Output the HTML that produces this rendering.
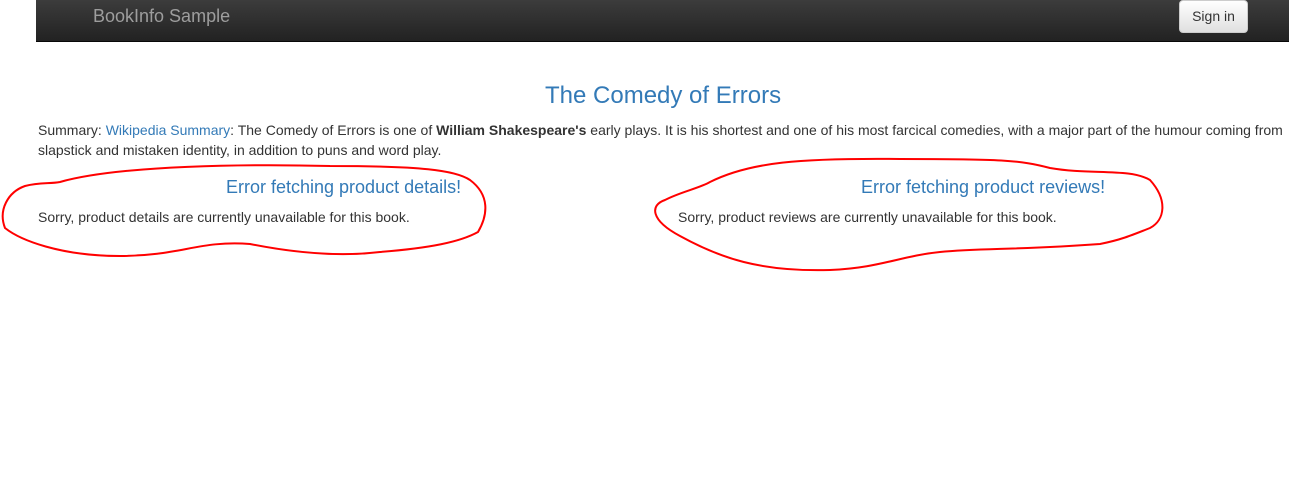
<!DOCTYPE html>
<html><head><meta charset="utf-8"><style>
body{margin:0;width:1289px;height:484px;background:#fff;font-family:"Liberation Sans",Arial,sans-serif;position:relative;overflow:hidden;color:#333}
.nav{position:absolute;left:36px;top:0;width:1253px;height:41px;background:linear-gradient(#3c3c3c,#222);border-bottom:1px solid #080808}
.brand{position:absolute;left:57px;top:6px;font-size:18px;color:#9d9d9d}
.btn{position:absolute;left:1143px;top:0;width:69px;height:33px;background:linear-gradient(#fff,#e0e0e0);border:1px solid #ccc;border-radius:4px;box-sizing:border-box;font-size:14px;color:#333;text-align:center;line-height:31px}
.t{position:absolute;white-space:nowrap}
h2{position:absolute;margin:0;font-weight:normal;color:#337ab7;white-space:nowrap}
a{color:#337ab7;text-decoration:none}
p{font-size:14px;margin:0}
</style></head><body>
<div class="nav"><div class="brand">BookInfo Sample</div><div class="btn">Sign in</div></div>
<h2 style="left:545px;top:82px;font-size:24px">The Comedy of Errors</h2>
<p class="t" style="left:38px;top:120px;line-height:20px">Summary: <a>Wikipedia Summary</a>: The Comedy of Errors is one of <b>William Shakespeare's</b> early plays. It is his shortest and one of his most farcical comedies, with a major part of the humour coming from<br>slapstick and mistaken identity, in addition to puns and word play.</p>
<h2 style="left:226px;top:177px;font-size:18px">Error fetching product details!</h2>
<p class="t" style="left:38px;top:209px">Sorry, product details are currently unavailable for this book.</p>
<h2 style="left:861px;top:177px;font-size:18px">Error fetching product reviews!</h2>
<p class="t" style="left:678px;top:209px">Sorry, product reviews are currently unavailable for this book.</p>
<svg width="1289" height="484" style="position:absolute;left:0;top:0" fill="none" stroke="#f00" stroke-width="2">
<path d="M60,182 C120,165 250,164 330,166 C420,166 455,170 470,180 C490,195 488,215 478,232 C460,242 430,248 380,252 C330,258 280,250 250,244 C200,240 180,256 120,256 C60,256 20,240 5,228 C-2,210 8,192 25,186 C40,182 50,184 60,182 Z"/>
<path d="M710,182 C750,162 800,158 900,159 C1000,159 1020,160 1050,168 C1090,175 1130,168 1150,180 C1168,200 1165,220 1150,228 C1130,236 1120,240 1100,244 C1020,250 980,248 940,252 C900,256 880,268 830,270 C760,272 720,258 680,236 C650,220 650,205 665,200 C680,192 700,188 710,182 Z"/>
</svg>
</body></html>
